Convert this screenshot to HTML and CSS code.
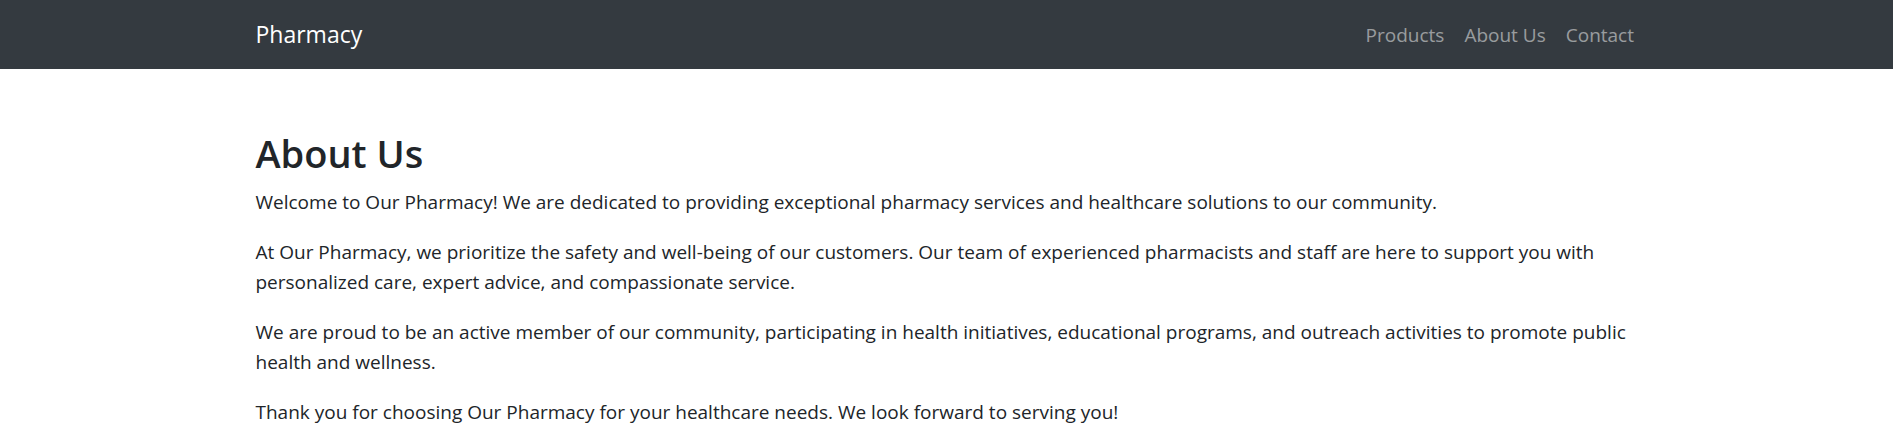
FILE: index.html
```html
<!DOCTYPE html>
<html lang="en">
<head>
<meta charset="utf-8">
<title>Pharmacy - About Us</title>
<link rel="stylesheet" href="styles.css">
</head>
<body>
<nav class="navbar">
  <div class="container nav-inner">
    <a class="brand" href="#">Pharmacy</a>
    <ul class="nav-links">
      <li><a class="nav-link" href="#">Products</a></li>
      <li><a class="nav-link" href="#">About Us</a></li>
      <li><a class="nav-link" href="#">Contact</a></li>
    </ul>
  </div>
</nav>
<main class="container content">
  <h1 class="title">About Us</h1>
  <p>Welcome to Our Pharmacy! We are dedicated to providing exceptional pharmacy services and healthcare solutions to our community.</p>
  <p>At Our Pharmacy, we prioritize the safety and well-being of our customers. Our team of experienced pharmacists and staff are here to support you with personalized care, expert advice, and compassionate service.</p>
  <p>We are proud to be an active member of our community, participating in health initiatives, educational programs, and outreach activities to promote public health and wellness.</p>
  <p>Thank you for choosing Our Pharmacy for your healthcare needs. We look forward to serving you!</p>
</main>
</body>
</html>
```
FILE: styles.css
```css
* { box-sizing: border-box; }
html, body { margin: 0; padding: 0; }
body {
  font-family: "Open Sans", "Noto Sans", "Liberation Sans", sans-serif;
  font-size: 19px;
  line-height: 30px;
  color: #212529;
  background: #fff;
}
.container {
  width: 100%;
  max-width: 1425px;
  margin: 0 auto;
  padding: 0 18.75px 0 21.5px;
}
.navbar {
  background: #343a40;
  padding: 10px 20px;
}
.nav-inner {
  display: flex;
  align-items: center;
  justify-content: space-between;
  padding-right: 15px;
}
.brand {
  color: #fff;
  text-decoration: none;
  font-size: 23px;
  line-height: 37.5px;
  padding: 5px 0;
}
.nav-links {
  list-style: none;
  margin: 0;
  padding: 0;
  display: flex;
}
.nav-link {
  display: block;
  color: rgba(255, 255, 255, 0.5);
  text-decoration: none;
  padding: 9.5px 10px;
}
.content { margin-top: 60px; }
.title {
  font-size: 38px;
  line-height: 48px;
  font-weight: 600;
  margin: 0 0 10px;
}
p { margin: 0 0 20px; }
```
